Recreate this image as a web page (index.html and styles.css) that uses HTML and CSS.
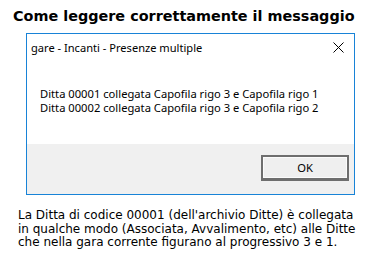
FILE: index.html
```html
<!DOCTYPE html>
<html lang="it">
<head>
  <meta charset="UTF-8">
  <title>Come leggere correttamente il messaggio</title>
  <link rel="stylesheet" href="styles.css">
</head>
<body>
  <h1 class="page-title">Come leggere correttamente il messaggio</h1>

  <div class="dialog">
    <div class="dialog-head">
      <span class="dialog-title">gare - Incanti - Presenze multiple</span>
      <svg class="dialog-close" width="11" height="11" viewBox="0 0 11 11">
        <path d="M0.5 0.5 L10.5 10.5 M10.5 0.5 L0.5 10.5" stroke="#000" stroke-width="1" fill="none"/>
      </svg>
    </div>
    <div class="dialog-body">
      <div>Ditta 00001 collegata Capofila rigo 3 e Capofila rigo 1</div>
      <div>Ditta 00002 collegata Capofila rigo 3 e Capofila rigo 2</div>
    </div>
    <div class="dialog-foot">
      <button class="ok-btn">OK</button>
    </div>
  </div>

  <p class="note">La Ditta di codice 00001 (dell'archivio Ditte) è collegata<br>
    in qualche modo (Associata, Avvalimento, etc) alle Ditte<br>
    che nella gara corrente figurano al progressivo 3 e 1.</p>
</body>
</html>
```

FILE: styles.css
```css
body {
  margin: 0;
  background: #fff;
  font-family: "DejaVu Sans", Verdana, sans-serif;
  color: #000;
}

.page-title {
  margin: 7px 0 0 13px;
  font-size: 14.4px;
  font-weight: bold;
  line-height: 18px;
}

.dialog {
  margin: 8px 0 0 26px;
  width: 327px;
  border: 1px solid #1883d7;
  font-family: "Noto Sans", "Segoe UI", sans-serif;
  font-size: 11.2px;
}

.dialog-head {
  display: flex;
  justify-content: space-between;
  align-items: center;
  height: 26px;
  padding: 0 10px 0 4px;
}

.dialog-title {
  font-size: 11.1px;
}

.dialog-body {
  background: #fff;
  padding: 27px 0 29px 13px;
  line-height: 14px;
}

.dialog-foot {
  background: #f0f0f0;
  height: 50px;
  display: flex;
  justify-content: flex-end;
  align-items: flex-start;
  padding: 11px 5px 0 0;
  box-sizing: border-box;
}

.ok-btn {
  width: 88px;
  height: 26px;
  background: #efefef;
  border: 2px solid #6e6e6e;
  border-bottom-width: 3px;
  box-shadow: inset 0 0 0 1px #fbfbfb;
  font-family: "Noto Sans", "Segoe UI", sans-serif;
  font-size: 11.2px;
  color: #000;
  padding: 0;
}

.note {
  margin: 14px 0 0 18px;
  font-size: 12px;
  line-height: 13.5px;
}
```
